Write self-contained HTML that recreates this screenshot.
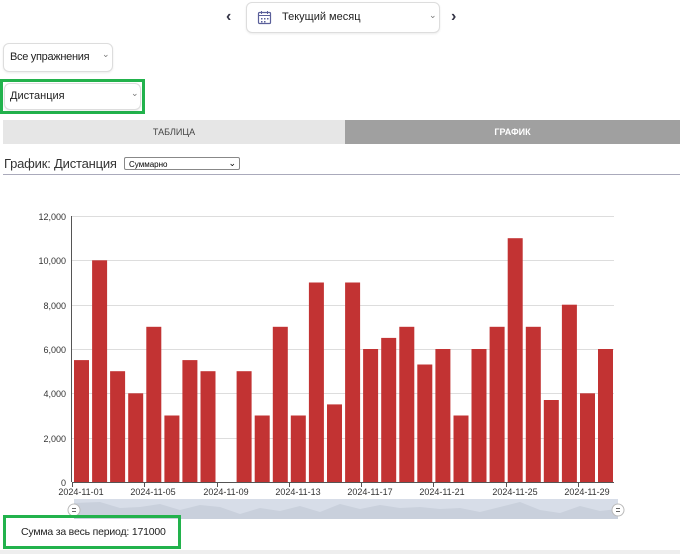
<!DOCTYPE html>
<html><head><meta charset="utf-8"><style>
body{margin:0;width:680px;height:554px;background:#fff;font-family:"Liberation Sans",sans-serif;position:relative;overflow:hidden}
.a{position:absolute}
.sel{position:absolute;border:1px solid #ddd;border-radius:6px;background:#fff;box-shadow:0 1px 2px rgba(0,0,0,.08);font-size:11px;color:#222;white-space:nowrap}
</style></head><body>
<div class="a" style="left:226px;top:8px;font-size:16px;color:#334;font-weight:bold">‹</div>
<div class="a" style="left:451px;top:8px;font-size:16px;color:#334;font-weight:bold">›</div>
<div class="sel" style="left:246px;top:2px;width:192px;height:29px">
<svg class="a" style="left:10px;top:7px" width="15" height="15" viewBox="0 0 15 15"><rect x="1.5" y="2.5" width="12" height="11" rx="1" fill="none" stroke="#5a5f9a" stroke-width="1.2"/><line x1="1.5" y1="5.5" x2="13.5" y2="5.5" stroke="#5a5f9a"/><line x1="4.5" y1="1" x2="4.5" y2="4" stroke="#5a5f9a"/><line x1="10.5" y1="1" x2="10.5" y2="4" stroke="#5a5f9a"/><g fill="#5a5f9a"><rect x="4" y="8" width="1.5" height="1.5"/><rect x="7" y="8" width="1.5" height="1.5"/><rect x="10" y="8" width="1.5" height="1.5"/><rect x="4" y="11" width="1.5" height="1.5"/><rect x="7" y="11" width="1.5" height="1.5"/></g></svg>
<span class="a" style="left:35px;top:8px">Текущий месяц</span><span class="a" style="left:182px;top:7px;font-size:9px;color:#777">⌄</span></div>
<div class="sel" style="left:3px;top:43px;width:108px;height:27px"><span class="a" style="left:6px;top:7px;letter-spacing:-0.3px">Все упражнения</span><span class="a" style="left:98px;top:5px;font-size:9px;color:#777">⌄</span></div>
<div class="a" style="left:0;top:79px;width:145px;height:35px;border:3px solid #22b24c;box-sizing:border-box"></div>
<div class="sel" style="left:4px;top:83px;width:135px;height:25px"><span class="a" style="left:5px;top:6px">Дистанция</span><span class="a" style="left:126px;top:4px;font-size:9px;color:#777">⌄</span></div>
<div class="a" style="left:3px;top:120px;width:342px;height:24px;background:#e6e6e6;font-size:9px;color:#444;text-align:center;line-height:24px">ТАБЛИЦА</div>
<div class="a" style="left:345px;top:120px;width:335px;height:24px;background:#a0a0a0;font-size:9px;color:#fff;font-weight:bold;text-align:center;line-height:24px">ГРАФИК</div>
<div class="a" style="left:4px;top:156px;font-size:13px;color:#333;white-space:nowrap;letter-spacing:-0.2px">График: Дистанция</div>
<div class="a" style="left:124px;top:157px;height:13px;border:1px solid #888;border-radius:2px;font-size:8px;line-height:13px;padding-left:4px;box-sizing:border-box;width:116px">Суммарно<span class="a" style="right:3px;top:-1px;font-size:9px">⌄</span></div>
<div class="a" style="left:3px;top:174px;width:677px;height:1px;background:#aab"></div>
<svg class="a" style="left:0;top:0" width="680" height="554">
<g stroke="#ddd" stroke-width="1"><line x1="72" x2="614" y1="216.5" y2="216.5"/><line x1="72" x2="614" y1="260.5" y2="260.5"/><line x1="72" x2="614" y1="305.5" y2="305.5"/><line x1="72" x2="614" y1="349.5" y2="349.5"/><line x1="72" x2="614" y1="393.5" y2="393.5"/><line x1="72" x2="614" y1="438.5" y2="438.5"/></g>
<g font-size="9" fill="#333" text-anchor="end"><text x="66" y="220">12,000</text><text x="66" y="264">10,000</text><text x="66" y="309">8,000</text><text x="66" y="353">6,000</text><text x="66" y="397">4,000</text><text x="66" y="442">2,000</text><text x="66" y="486">0</text></g>
<g fill="#c23333">
<rect x="74" y="360.1" width="15" height="121.9"/><rect x="92.1" y="260.3" width="15" height="221.7"/><rect x="110.1" y="371.2" width="15" height="110.8"/><rect x="128.2" y="393.3" width="15" height="88.7"/><rect x="146.3" y="326.8" width="15" height="155.2"/><rect x="164.4" y="415.5" width="15" height="66.5"/><rect x="182.4" y="360.1" width="15" height="121.9"/><rect x="200.5" y="371.2" width="15" height="110.8"/>
<rect x="236.6" y="371.2" width="15" height="110.8"/><rect x="254.7" y="415.5" width="15" height="66.5"/><rect x="272.8" y="326.8" width="15" height="155.2"/><rect x="290.8" y="415.5" width="15" height="66.5"/><rect x="308.9" y="282.5" width="15" height="199.5"/><rect x="327" y="404.4" width="15" height="77.6"/><rect x="345.1" y="282.5" width="15" height="199.5"/><rect x="363.1" y="349" width="15" height="133"/><rect x="381.2" y="337.9" width="15" height="144.1"/><rect x="399.3" y="326.8" width="15" height="155.2"/><rect x="417.3" y="364.5" width="15" height="117.5"/><rect x="435.4" y="349" width="15" height="133"/><rect x="453.5" y="415.5" width="15" height="66.5"/><rect x="471.5" y="349" width="15" height="133"/><rect x="489.6" y="326.8" width="15" height="155.2"/><rect x="507.7" y="238.2" width="15" height="243.8"/><rect x="525.8" y="326.8" width="15" height="155.2"/><rect x="543.8" y="400" width="15" height="82"/><rect x="561.9" y="304.7" width="15" height="177.3"/><rect x="580" y="393.3" width="15" height="88.7"/><rect x="598" y="349" width="15" height="133"/></g>
<line x1="71.5" x2="71.5" y1="216" y2="482" stroke="#555"/><line x1="72" x2="614" y1="482.5" y2="482.5" stroke="#555"/>
<g stroke="#555"><line x1="72.5" x2="72.5" y1="482" y2="487"/><line x1="144.5" x2="144.5" y1="482" y2="487"/><line x1="217.5" x2="217.5" y1="482" y2="487"/><line x1="289.5" x2="289.5" y1="482" y2="487"/><line x1="361.5" x2="361.5" y1="482" y2="487"/><line x1="433.5" x2="433.5" y1="482" y2="487"/><line x1="506.5" x2="506.5" y1="482" y2="487"/><line x1="578.5" x2="578.5" y1="482" y2="487"/></g>
<g font-size="9" fill="#333" text-anchor="middle"><text x="81" y="495">2024-11-01</text><text x="153" y="495">2024-11-05</text><text x="226" y="495">2024-11-09</text><text x="298" y="495">2024-11-13</text><text x="370" y="495">2024-11-17</text><text x="442" y="495">2024-11-21</text><text x="515" y="495">2024-11-25</text><text x="587" y="495">2024-11-29</text></g>
<rect x="74" y="499" width="544" height="20" fill="#d7dde8"/>
<path d="M74 503 L100 502 L120 508 L140 507 L160 504 L180 510 L200 505 L220 507 L240 514 L260 508 L280 511 L300 506 L320 512 L340 504 L360 509 L380 505 L400 508 L420 507 L440 509 L460 508 L480 512 L500 507 L520 502 L540 510 L560 513 L580 506 L600 511 L618 509 L618 519 L74 519Z" fill="#c9d0dc"/>
<g fill="#fff" stroke="#bbb"><circle cx="74" cy="510" r="6"/><circle cx="618" cy="510" r="6"/></g>
<g stroke="#666"><line x1="72" x2="76" y1="508.5" y2="508.5"/><line x1="72" x2="76" y1="511.5" y2="511.5"/><line x1="616" x2="620" y1="508.5" y2="508.5"/><line x1="616" x2="620" y1="511.5" y2="511.5"/></g>
</svg>
<div class="a" style="left:3px;top:515px;width:178px;height:34px;border:3px solid #22b24c;box-sizing:border-box;font-size:10.5px;color:#222;line-height:28px;padding-left:15px;white-space:nowrap;letter-spacing:-0.2px;overflow:hidden">Сумма за весь период: 171000</div>
<div class="a" style="left:0;top:550px;width:680px;height:4px;background:#eee"></div>
</body></html>
